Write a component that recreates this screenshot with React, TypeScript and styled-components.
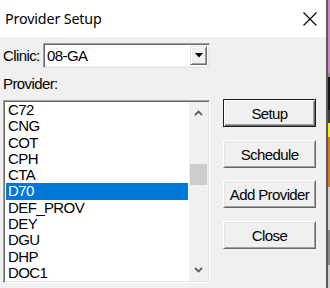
import React from "react";
import styled, { createGlobalStyle } from "styled-components";

const PROVIDERS = ["C72", "CNG", "COT", "CPH", "CTA", "D70", "DEF_PROV", "DEY", "DGU", "DHP", "DOC1"];
const SELECTED = "D70";

// what shows of the desktop behind the dialog, top to bottom
const BACKDROP = [
  { color: "#dc78dc", h: 73 },
  { color: "#8c8c8c", h: 4 },
  { color: "#141414", h: 33 },
  { color: "#3c3c3c", h: 13 },
  { color: "#f5f000", h: 14 },
  { color: "#e0780f", h: 50 },
  { color: "#d0d0d0", h: 43 },
  { color: "#8a8a8a", h: 35 },
  { color: "#cfcfcf", h: 23 },
];

const GlobalStyle = createGlobalStyle`
  html, body {
    margin: 0;
    padding: 0;
    width: 330px;
    height: 288px;
    overflow: hidden;
    background: #f0f0f0;
  }
  * { box-sizing: border-box; }
`;

const Screen = styled.div`
  display: flex;
  width: 330px;
  height: 288px;
`;

const Backdrop = styled.div`
  flex: 1;
  display: flex;
  flex-direction: column;
`;

const BackdropBand = styled.div<{ $color: string; $h: number }>`
  height: ${p => p.$h}px;
  background: ${p => p.$color};
`;

const Window = styled.div`
  width: 328px;
  height: 288px;
  display: flex;
  flex-direction: column;
  border-right: 2px solid #5c5c5c;
  background: #f0f0f0;
`;

const TitleBar = styled.div`
  height: 37px;
  flex-shrink: 0;
  background: #fff;
  display: flex;
  align-items: center;
  justify-content: space-between;
  padding: 0 9px 0 5px;
`;

const Title = styled.div`
  font-family: "Noto Sans", "Open Sans", sans-serif;
  font-size: 14.3px;
  color: #000;
  letter-spacing: -0.15px;
`;

const CloseGlyph = styled.svg`
  display: block;
  margin-top: 1px;
`;

const Body = styled.div`
  flex: 1;
  display: grid;
  grid-template-columns: 207px 93px;
  column-gap: 13px;
  padding: 6px 0 0 3px;
  font-family: "Liberation Sans", Arial, sans-serif;
  font-size: 15px;
  letter-spacing: -0.6px;
  color: #000;
`;

const LeftColumn = styled.div`
  display: flex;
  flex-direction: column;
`;

const ClinicRow = styled.div`
  display: flex;
  align-items: center;
  height: 25px;
`;

const FieldLabel = styled.div`
  width: 40px;
`;

const Combo = styled.div`
  flex: 1;
  height: 25px;
  display: flex;
  align-items: center;
  background: #fff;
  border: 1px solid;
  border-color: #a0a0a0 #e3e3e3 #e3e3e3 #a0a0a0;
  box-shadow: inset 1px 1px #696969, inset -1px -1px #f0f0f0;
  padding: 2px 2px 2px 3px;
`;

const ComboValue = styled.div`
  flex: 1;
`;

const DropButton = styled.div`
  width: 17px;
  height: 19px;
  display: flex;
  align-items: center;
  justify-content: center;
  background: #f0f0f0;
  border: 1px solid;
  border-color: #e3e3e3 #696969 #696969 #e3e3e3;
  box-shadow: inset 1px 1px #fff, inset -1px -1px #a0a0a0;
`;

const ProviderLabel = styled.div`
  height: 16px;
  line-height: 16px;
  margin: 8px 0;
`;

const ListBox = styled.div`
  height: 183px;
  display: flex;
  background: #fff;
  border: 1px solid;
  border-color: #a0a0a0 #fff #fff #a0a0a0;
  box-shadow: inset 1px 1px #696969, inset -1px -1px #e3e3e3;
  padding: 1px;
`;

const Items = styled.div`
  flex: 1;
  padding-left: 1px;
  overflow: hidden;
`;

const Item = styled.div<{ $selected?: boolean }>`
  height: 16.3px;
  line-height: 16.3px;
  padding-left: 2px;
  background: ${p => (p.$selected ? "#0078d7" : "transparent")};
  color: ${p => (p.$selected ? "#fff" : "#000")};
  margin-right: 1px;
`;

const ScrollBar = styled.div`
  width: 19px;
  display: flex;
  flex-direction: column;
  background: #f0f0f0;
`;

const ScrollArrow = styled.div`
  height: 22px;
  display: flex;
  align-items: center;
  justify-content: center;
`;

const Track = styled.div`
  flex: 1;
  padding: 0 1px;
`;

const Thumb = styled.div<{ $top: number; $h: number }>`
  margin-top: ${p => p.$top}px;
  height: ${p => p.$h}px;
  background: #cdcdcd;
`;

const ButtonColumn = styled.div`
  display: flex;
  flex-direction: column;
  gap: 12.7px;
  padding-top: 56px;
`;

const DialogButton = styled.div<{ $default?: boolean }>`
  height: 28px;
  display: flex;
  align-items: center;
  justify-content: center;
  background: #f0f0f0;
  border: 1px solid;
  border-color: ${p => (p.$default ? "#1e1e1e" : "#fff #696969 #696969 #fff")};
  box-shadow: ${p =>
    p.$default
      ? "inset 1px 1px #fff, inset -1px -1px #696969, inset -2px -2px #a0a0a0"
      : "inset 1px 1px #e3e3e3, inset -1px -1px #a0a0a0"};
  padding-top: 1px;
`;

const Chevron = ({ up }: { up?: boolean }) => (
  <svg width="9" height="6" viewBox="0 0 9 6">
    <path
      d={up ? "M1 5 L4.5 1.5 L8 5" : "M1 1 L4.5 4.5 L8 1"}
      fill="none"
      stroke="#606060"
      strokeWidth="1.8"
    />
  </svg>
);

export default function App(): JSX.Element {
  return (
    <>
      <GlobalStyle />
      <Screen>
        <Window>
          <TitleBar>
            <Title>Provider Setup</Title>
            <CloseGlyph width="14" height="14" viewBox="0 0 14 14">
              <path d="M0.5 0.5 L13.5 13.5 M13.5 0.5 L0.5 13.5" stroke="#000" strokeWidth="1.1" />
            </CloseGlyph>
          </TitleBar>
          <Body>
            <LeftColumn>
              <ClinicRow>
                <FieldLabel>Clinic:</FieldLabel>
                <Combo>
                  <ComboValue>08-GA</ComboValue>
                  <DropButton>
                    <svg width="8" height="5" viewBox="0 0 8 5">
                      <path d="M0 0 H8 L4 4.5 Z" fill="#000" />
                    </svg>
                  </DropButton>
                </Combo>
              </ClinicRow>
              <ProviderLabel>Provider:</ProviderLabel>
              <ListBox>
                <Items>
                  {PROVIDERS.map(p => (
                    <Item key={p} $selected={p === SELECTED}>
                      {p}
                    </Item>
                  ))}
                </Items>
                <ScrollBar>
                  <ScrollArrow>
                    <Chevron up />
                  </ScrollArrow>
                  <Track>
                    <Thumb $top={40} $h={21} />
                  </Track>
                  <ScrollArrow>
                    <Chevron />
                  </ScrollArrow>
                </ScrollBar>
              </ListBox>
            </LeftColumn>
            <ButtonColumn>
              <DialogButton $default>Setup</DialogButton>
              <DialogButton>Schedule</DialogButton>
              <DialogButton>Add Provider</DialogButton>
              <DialogButton>Close</DialogButton>
            </ButtonColumn>
          </Body>
        </Window>
        <Backdrop>
          {BACKDROP.map((b, i) => (
            <BackdropBand key={i} $color={b.color} $h={b.h} />
          ))}
        </Backdrop>
      </Screen>
    </>
  );
}
